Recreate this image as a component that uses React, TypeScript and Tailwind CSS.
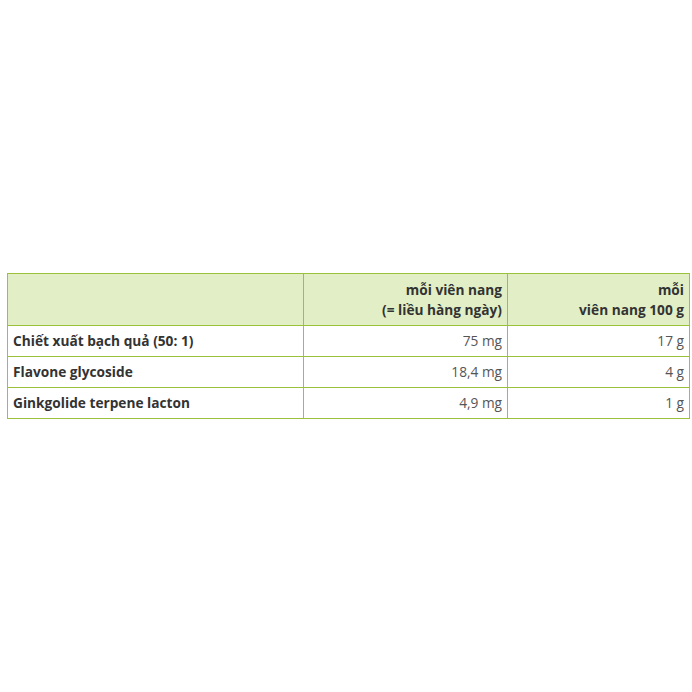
const rows = [
  { name: 'Chiết xuất bạch quả (50: 1)', perCapsule: '75 mg', per100: '17 g' },
  { name: 'Flavone glycoside', perCapsule: '18,4 mg', per100: '4 g' },
  { name: 'Ginkgolide terpene lacton', perCapsule: '4,9 mg', per100: '1 g' },
];

export default function App() {
  return (
    <div className="flex h-[692px] w-[692px] items-center bg-white px-[7px] font-['Open_Sans',sans-serif] text-[13.7px]">
      <table className="w-[682px] table-fixed border-collapse">
        <colgroup>
          <col className="w-[296px]" />
          <col className="w-[204px]" />
          <col className="w-[182px]" />
        </colgroup>
        <thead>
          <tr className="h-[52px] bg-[#e2efc6] font-bold text-[#333]">
            <th className="border border-[#9cc23c]" />
            <th className="border border-[#9cc23c] px-[5px] text-right leading-[20px]">
              mỗi viên nang
              <br />
              (= liều hàng ngày)
            </th>
            <th className="border border-[#9cc23c] px-[5px] text-right leading-[20px]">
              mỗi
              <br />
              viên nang 100 g
            </th>
          </tr>
        </thead>
        <tbody>
          {rows.map((r) => (
            <tr key={r.name} className="h-[31px]">
              <td className="border border-[#9cc23c] px-[5px] font-bold text-[#333]">{r.name}</td>
              <td className="border border-[#9cc23c] px-[5px] text-right text-[#555]">{r.perCapsule}</td>
              <td className="border border-[#9cc23c] px-[5px] text-right text-[#555]">{r.per100}</td>
            </tr>
          ))}
        </tbody>
      </table>
    </div>
  );
}
